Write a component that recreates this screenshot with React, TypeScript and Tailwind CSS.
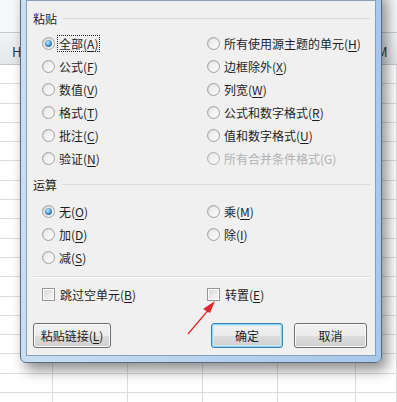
import type { ReactNode } from 'react'

const ROWS = Array.from({ length: 18 })
const COLS = [53, 75, 75, 75, 78, 41]

function Key({ text, k }: { text: string; k?: string }) {
  if (!k) return <>{text}</>
  return (
    <>
      {text}(<span className="underline underline-offset-[2px]">{k}</span>)
    </>
  )
}

function Radio({ checked }: { checked?: boolean }) {
  return (
    <span className="flex h-[13px] w-[13px] shrink-0 items-center justify-center rounded-full border border-[#a2a2a2] bg-[linear-gradient(135deg,#d4d4d4,#fbfbfb)]">
      {checked ? (
        <span className="h-[7px] w-[7px] rounded-full bg-[radial-gradient(circle_at_40%_35%,#c4ecfc,#3a8fcb_55%,#17507f)]" />
      ) : (
        <span className="h-[9px] w-[9px] rounded-full bg-[linear-gradient(135deg,#e9e9e9,#fbfbfb)]" />
      )}
    </span>
  )
}

function Check() {
  return (
    <span className="flex h-[13px] w-[13px] shrink-0 items-center justify-center border border-[#969696] bg-white">
      <span className="h-[9px] w-[9px] bg-[linear-gradient(135deg,#d9d9d9,#f7f7f7)]" />
    </span>
  )
}

function Option({ children, checked, disabled, focus }: { children: ReactNode; checked?: boolean; disabled?: boolean; focus?: boolean }) {
  return (
    <div className={`flex h-[23px] items-center ${disabled ? 'text-[#a3a3a3] opacity-80' : ''}`}>
      <Radio checked={checked} />
      <span className={`ml-[2px] border px-[1px] leading-[15px] ${focus ? 'border-dotted border-[#222]' : 'border-transparent'}`}>{children}</span>
    </div>
  )
}

function Heading({ children }: { children: ReactNode }) {
  return (
    <div className="flex h-[17px] items-center">
      <span className="leading-[17px]">{children}</span>
      <span className="ml-[5px] flex-1 border-t border-[#dcdcdc]" />
    </div>
  )
}

function Button({ children, primary, w }: { children: ReactNode; primary?: boolean; w: string }) {
  return (
    <div
      className={`flex h-[25px] ${w} items-center justify-center rounded-[3px] border ${
        primary
          ? 'border-[#3c7fb1] shadow-[inset_0_0_0_1px_#8fd4f3,inset_0_0_0_2px_#c9ecfb]'
          : 'border-[#707070] shadow-[inset_0_0_0_1px_#fbfbfb]'
      } bg-[linear-gradient(#f2f2f2_0%,#ebebeb_50%,#dddddd_50%,#cfcfcf_100%)]`}
    >
      {children}
    </div>
  )
}

export default function App() {
  return (
    <div className="relative h-[402px] w-[397px] overflow-hidden bg-white font-[family-name:'Microsoft_YaHei','Noto_Sans_CJK_SC',sans-serif] text-[12px] text-[#1e1e1e]">
      {/* spreadsheet behind the dialog */}
      <div className="flex flex-col">
        <div className="h-[33px] border-b border-[#c5c9cf] bg-[#f7f8f9]" />
        <div className="flex h-[32px] border-b border-[#c5c9cf] bg-[linear-gradient(#f3f4f5,#e3e6ea)] text-[13px] text-[#333]">
          <div className="flex w-[53px] items-center pl-[12px] pt-[6px]">H</div>
          <div className="flex-1" />
          <div className="flex w-[20px] items-center pt-[6px]">M</div>
        </div>
        {ROWS.map((_, i) => (
          <div key={i} className="flex h-[19.3px] border-b border-[#dadcdd]">
            {COLS.map((w, j) => (
              <div key={j} style={{ width: w }} className="h-full shrink-0 border-r border-[#dadcdd]" />
            ))}
          </div>
        ))}
      </div>

      {/* Paste Special dialog */}
      <div className="absolute left-[20px] top-[-10px] flex h-[373px] w-[362px] flex-col rounded-b-[6px] border border-[#5b6b7e] bg-[linear-gradient(90deg,#c9def3,#b7d2ee_50%,#a6c8ec)] px-[5px] pb-[6px] pt-[9px] shadow-[5px_7px_14px_rgba(0,0,0,0.45)]">
        <div className="flex flex-1 flex-col border border-[#8aa0b8] bg-[#f0f0f0] pl-[6px] pr-[5px] pt-[9px]">
          <Heading>粘贴</Heading>
          <div className="mt-[5px] grid grid-cols-[165px_1fr] pl-[9px]">
            <div className="flex flex-col">
              <Option checked focus><Key text="全部" k="A" /></Option>
              <Option><Key text="公式" k="F" /></Option>
              <Option><Key text="数值" k="V" /></Option>
              <Option><Key text="格式" k="T" /></Option>
              <Option><Key text="批注" k="C" /></Option>
              <Option><Key text="验证" k="N" /></Option>
            </div>
            <div className="flex flex-col">
              <Option><Key text="所有使用源主题的单元" k="H" /></Option>
              <Option><Key text="边框除外" k="X" /></Option>
              <Option><Key text="列宽" k="W" /></Option>
              <Option><Key text="公式和数字格式" k="R" /></Option>
              <Option><Key text="值和数字格式" k="U" /></Option>
              <Option disabled>所有合并条件格式(G)</Option>
            </div>
          </div>

          <div className="mt-[6px]">
            <Heading>运算</Heading>
          </div>
          <div className="mt-[7px] grid grid-cols-[165px_1fr] pl-[9px]">
            <div className="flex flex-col">
              <Option checked><Key text="无" k="O" /></Option>
              <Option><Key text="加" k="D" /></Option>
              <Option><Key text="减" k="S" /></Option>
            </div>
            <div className="flex flex-col">
              <Option><Key text="乘" k="M" /></Option>
              <Option><Key text="除" k="I" /></Option>
            </div>
          </div>

          <div className="mt-[7px] border-t border-b border-t-[#dcdcdc] border-b-white" />

          <div className="mt-[5px] grid h-[23px] grid-cols-[165px_1fr] pl-[9px]">
            <div className="flex items-center gap-[5px]">
              <Check />
              <span><Key text="跳过空单元" k="B" /></span>
            </div>
            <div className="flex items-center gap-[5px]">
              <Check />
              <span><Key text="转置" k="E" /></span>
            </div>
          </div>

          <div className="mt-[17px] flex">
            <Button w="w-[78px]"><Key text="粘贴链接" k="L" /></Button>
            <div className="flex-1" />
            <Button w="w-[72px]" primary>确定</Button>
            <div className="w-[11px]" />
            <Button w="w-[73px]">取消</Button>
            <div className="w-[3px]" />
          </div>
        </div>
      </div>

      {/* red arrow pointing at 转置 */}
      <svg className="absolute left-0 top-0" width="397" height="402" viewBox="0 0 397 402">
        <line x1="188" y1="334" x2="210" y2="308" stroke="#e0262a" strokeWidth="1.2" />
        <polygon points="215,301 203,309 210,313" fill="#e0262a" />
      </svg>
    </div>
  )
}
